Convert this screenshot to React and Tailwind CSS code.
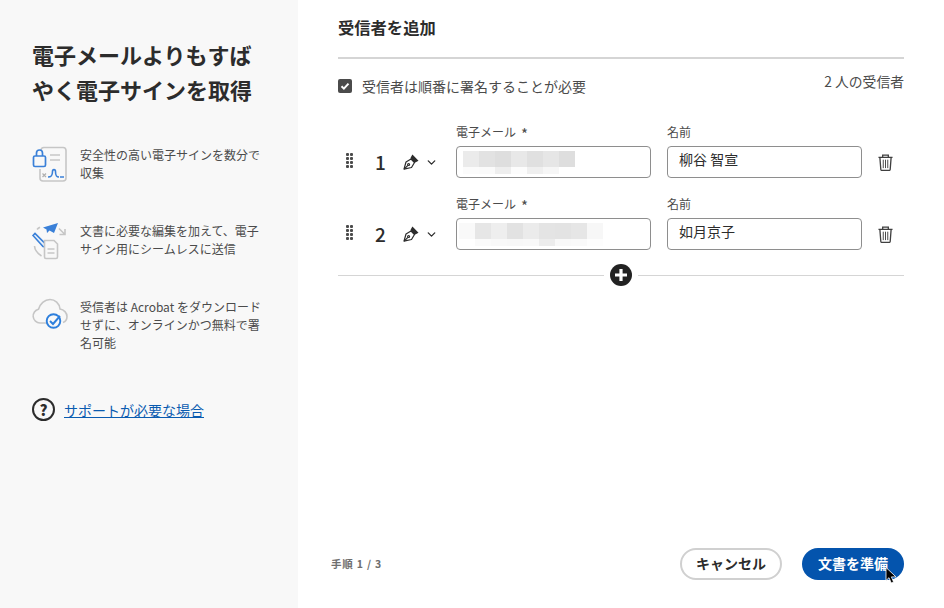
import { ChevronDown } from "lucide-react";

const FONT = "font-['Noto_Sans_CJK_JP','Noto_Sans',sans-serif]";

// Mosaic blocks standing in for the blurred addresses
const emailOne = [
  ["bg-[#ebebeb]", "bg-[#e2e2e2]", "bg-[#dedede]", "bg-[#e8e8e8]", "bg-[#e0e0e0]", "bg-[#e6e6e6]", "bg-[#dedede]"],
  ["bg-[#fbfbfb]", "bg-[#fafafa]", "bg-[#eeeeee]", "bg-[#fcfcfc]", "bg-[#efefef]", "bg-[#f6f6f6]", "bg-white"],
];

const emailTwo = [
  ["bg-[#f9f9f9]", "bg-[#e6e6e6]", "bg-[#eeeeee]", "bg-[#e2e2e2]", "bg-[#ebebeb]", "bg-[#e4e4e4]", "bg-[#e3e3e3]", "bg-[#e6e6e6]", "bg-[#f7f7f7]"],
  ["bg-white", "bg-[#fafafa]", "bg-[#f8f8f8]", "bg-[#f7f7f7]", "bg-[#f8f8f8]", "bg-[#ececec]", "bg-[#f8f8f8]", "bg-[#f9f9f9]", "bg-[#fdfdfd]"],
];

const recipients = [
  { id: 1, name: "柳谷 智宣", mosaic: emailOne, inset: "ml-[6px]" },
  { id: 2, name: "如月京子", mosaic: emailTwo, inset: "ml-[2px]" },
];

function LockDocIcon() {
  return (
    <svg width="40" height="40" viewBox="0 0 40 40" fill="none">
      <path d="M9 4.5a3 3 0 0 1 3-3h19a3 3 0 0 1 3 3v27.5a3 3 0 0 1-3 3H11a3 3 0 0 1-3-3v-9" stroke="#c6c6c6" strokeWidth="1.6" />
      <path d="M18 9h10M18 14h10" stroke="#c6c6c6" strokeWidth="1.6" />
      <path d="M10.5 27.5l3.5 3.5M14 27.5l-3.5 3.5" stroke="#b0b0b0" strokeWidth="1.2" />
      <path d="M16 31c3 0 4.5-1 4.5-5.5 0-2.5 3-2.5 3 0 0 4.5 1 5.5 3.5 5.5M28 31h4" stroke="#3a80d8" strokeWidth="1.6" />
      <rect x="1.5" y="10" width="12" height="10.5" rx="1.5" fill="#f8f8f8" stroke="#3a80d8" strokeWidth="1.7" />
      <path d="M4.5 10V7a3 3 0 0 1 6 0v3" stroke="#3a80d8" strokeWidth="1.7" />
    </svg>
  );
}

function SendDocIcon() {
  return (
    <svg width="40" height="40" viewBox="0 0 40 40" fill="none">
      <path d="M5 7.5c.8-.9 1.8-1.6 3-2.2M2.5 24c.3 4 2.5 7 7 10" stroke="#c6c6c6" strokeWidth="1.6" />
      <path d="M27 6.500l5.500 5.500M33 7v5.500h-5.500" stroke="#c6c6c6" strokeWidth="1.6" />
      <path d="M11 5.500l15-4.500-4 10-4.500-2.500-2.500 2.500-.5-3.500z" fill="#3a80d8" />
      <path d="M1 13.500l2-2 10.500 10.500.5 3-3-.5z" fill="#eaf2fb" stroke="#3a80d8" strokeWidth="1.6" />
      <path d="M12.500 18.500h9.500l3.500 3.500v13a1.500 1.500 0 0 1-1.500 1.500H14a1.500 1.500 0 0 1-1.500-1.500z" fill="#f8f8f8" stroke="#c6c6c6" strokeWidth="1.6" />
      <path d="M15.500 27h7M15.500 31h7" stroke="#c6c6c6" strokeWidth="1.6" />
    </svg>
  );
}

function CloudCheckIcon() {
  return (
    <svg width="40" height="40" viewBox="0 0 40 40" fill="none">
      <path d="M15 25H8a7 7 0 0 1-1.500-13.800C8 6 12.500 1.500 18 1.500c5 0 9.500 4 10 9.500 4 .5 7 4 7 7.500 0 3-1.500 5-4 6" stroke="#c6c6c6" strokeWidth="1.6" />
      <circle cx="21.5" cy="23" r="6.8" stroke="#2d7fdc" strokeWidth="1.9" fill="#f8f8f8" />
      <path d="M18 23l3 3 7-8" stroke="#2d7fdc" strokeWidth="1.9" />
    </svg>
  );
}

const features = [
  { icon: <LockDocIcon />, text: "安全性の高い電子サインを数分で収集" },
  { icon: <SendDocIcon />, text: "文書に必要な編集を加えて、電子サイン用にシームレスに送信" },
  { icon: <CloudCheckIcon />, text: "受信者は Acrobat をダウンロードせずに、オンラインかつ無料で署名可能" },
];

const DragHandle = () => (
  <svg width="7" height="15" viewBox="0 0 7 15" fill="#4b4b4b">
    {[0, 4, 8, 12].map((y) => (
      <g key={y}>
        <rect x="0" y={y} width="3" height="3" rx="1" />
        <rect x="4" y={y} width="3" height="3" rx="1" />
      </g>
    ))}
  </svg>
);

const PenIcon = () => (
  <svg width="16" height="16" viewBox="0 0 16 16" fill="none" stroke="#2c2c2c" strokeWidth="1.2">
    <path d="M1 15.2l2-7.200 5-3 3.500 3.500-3 5z" strokeLinejoin="round" />
    <path d="M9.500 1.500l5 5-2.600 1.400-3.800-3.800z" fill="#2c2c2c" />
    <path d="M1.200 15l3.700-3.700" />
    <circle cx="5.600" cy="10.500" r="1" />
  </svg>
);

const TrashIcon = () => (
  <svg width="15" height="17" viewBox="0 0 16 18" fill="none" stroke="#3f3f3f" strokeWidth="1.4">
    <path d="M0.500 3.500h15M5 3.500V1.200h6v2.300" />
    <path d="M2 3.500l1 13a1 1 0 0 0 1 .9h8a1 1 0 0 0 1-.9l1-13" />
    <path d="M5.600 6v9M8 6v9M10.400 6v9" strokeWidth="1" />
  </svg>
);

const Cursor = () => (
  <svg width="12" height="17" viewBox="0 0 12 17" className="absolute left-[83px] top-[19px]">
    <path d="M1 0.500v13l3-2.800 2.200 5.200 2.400-1-2.200-5H11z" fill="#000" stroke="#fff" strokeWidth="0.8" />
  </svg>
);

const FieldLabel = ({ children, required }) => (
  <p className="mb-[5px] flex h-[18px] items-center text-[12px] leading-[18px] text-[#4b4b4b]">
    {children}
    {required && <span className="ml-[5px] mt-[2px] text-[15px] leading-none">*</span>}
  </p>
);

const RecipientRow = ({ recipient }) => (
  <div className="flex h-[72px] items-end">
    <div className="flex h-[32px] w-[118px] items-center">
      <div className="ml-[8px] mt-[-3px] flex w-[7px]">
        <DragHandle />
      </div>
      <span className="ml-[22px] w-[16px] text-[19px] font-medium text-[#2c2c2c]">{recipient.id}</span>
      <span className="ml-[12px] flex items-center">
        <PenIcon />
        <ChevronDown size={13} strokeWidth={2.4} className="ml-[6px] text-[#2c2c2c]" />
      </span>
    </div>
    <div className="w-[195px]">
      <FieldLabel required>電子メール</FieldLabel>
      <div className="flex h-[32px] flex-col justify-center overflow-hidden rounded-[4px] border border-[#8e8e8e] bg-white">
        {recipient.mosaic.map((row, i) => (
          <div key={i} className={`flex ${recipient.inset} ${i === 0 ? "h-[16px]" : "h-[7px]"}`}>
            {row.map((cls, j) => (
              <div key={j} className={`h-full w-[16px] shrink-0 ${cls}`} />
            ))}
          </div>
        ))}
      </div>
    </div>
    <div className="ml-[16px] w-[195px]">
      <FieldLabel>名前</FieldLabel>
      <div className="flex h-[32px] items-center rounded-[4px] border border-[#8e8e8e] bg-white pb-[5px] pl-[11px] text-[14px] text-[#2c2c2c]">
        {recipient.name}
      </div>
    </div>
    <div className="ml-[16px] flex h-[32px] items-center">
      <TrashIcon />
    </div>
  </div>
);

export default function App() {
  return (
    <div className={`flex h-[608px] w-[944px] overflow-hidden bg-white ${FONT}`}>
      <aside className="h-full w-[298px] shrink-0 bg-[#f8f8f8] pl-[32px] pt-[37px]">
        <h1 className="w-[222px] text-[22px] font-bold leading-[35px] text-[#2c2c2c]">
          電子メールよりもすばやく電子サインを取得
        </h1>
        <ul className="mt-[39px] flex flex-col gap-[36px]">
          {features.map((f, i) => (
            <li key={i} className="flex">
              <div className="h-[40px] w-[48px] shrink-0">{f.icon}</div>
              <p className="w-[184px] text-[12px] leading-[18px] text-[#4b4b4b]">{f.text}</p>
            </li>
          ))}
        </ul>
        <div className="mt-[46px] flex items-center">
          <span className="flex h-[23px] w-[23px] items-center justify-center rounded-full border-[2.5px] border-[#2c2c2c] text-[15px] font-black leading-none text-[#2c2c2c]">
            ?
          </span>
          <a className="ml-[9px] text-[14px] leading-[20px] text-[#0a5bb0] underline">サポートが必要な場合</a>
        </div>
      </aside>

      <main className="flex h-full flex-1 flex-col pl-[40px] pr-[40px]">
        <h2 className="flex h-[57px] items-start pt-[15px] text-[16.3px] font-bold leading-[24px] text-[#2c2c2c]">
          受信者を追加
        </h2>
        <div className="h-[2px] bg-[#d5d5d5]" />
        <div className="flex h-[40px] items-start justify-between">
          <label className="mt-[17px] flex items-center text-[14px] leading-[20px] text-[#4b4b4b]">
            <span className="flex h-[14px] w-[14px] items-center justify-center rounded-[2px] bg-[#4b4b4b]">
              <svg width="10" height="10" viewBox="0 0 10 10" fill="none" stroke="#fff" strokeWidth="2">
                <path d="M1.500 5.200l2.400 2.400 4.600-5" />
              </svg>
            </span>
            <span className="ml-[10px]">受信者は順番に署名することが必要</span>
          </label>
          <span className="mt-[12px] text-[13.8px] leading-[20px] text-[#4b4b4b]">2 人の受信者</span>
        </div>
        <div className="mt-[7px] flex flex-col">
          {recipients.map((r) => (
            <RecipientRow key={r.id} recipient={r} />
          ))}
        </div>
        <div className="mt-[14px] flex h-[22px] items-center">
          <div className="h-px flex-1 bg-[#d5d5d5]" />
          <svg width="22" height="22" viewBox="0 0 22 22" className="mx-[6px]">
            <circle cx="11" cy="11" r="11" fill="#222" />
            <path d="M11 5v12M5 11h12" stroke="#fff" strokeWidth="3.2" />
          </svg>
          <div className="h-px flex-1 bg-[#d5d5d5]" />
        </div>
        <div className="mt-auto mb-[28px] flex items-center justify-between">
          <span className="ml-[-7px] text-[10.5px] font-semibold tracking-[0.8px] text-[#6e6e6e]">手順 1 / 3</span>
          <div className="flex gap-[20px]">
            <button className="h-[32px] w-[102px] rounded-full border-2 border-[#d0d0d0] bg-white pb-[3px] text-[14px] font-bold leading-none text-[#2c2c2c]">
              キャンセル
            </button>
            <button className="relative h-[32px] w-[102px] rounded-full bg-[#0454ad] pb-[3px] text-[14px] font-bold leading-none text-white">
              文書を準備
              <Cursor />
            </button>
          </div>
        </div>
      </main>
    </div>
  );
}
